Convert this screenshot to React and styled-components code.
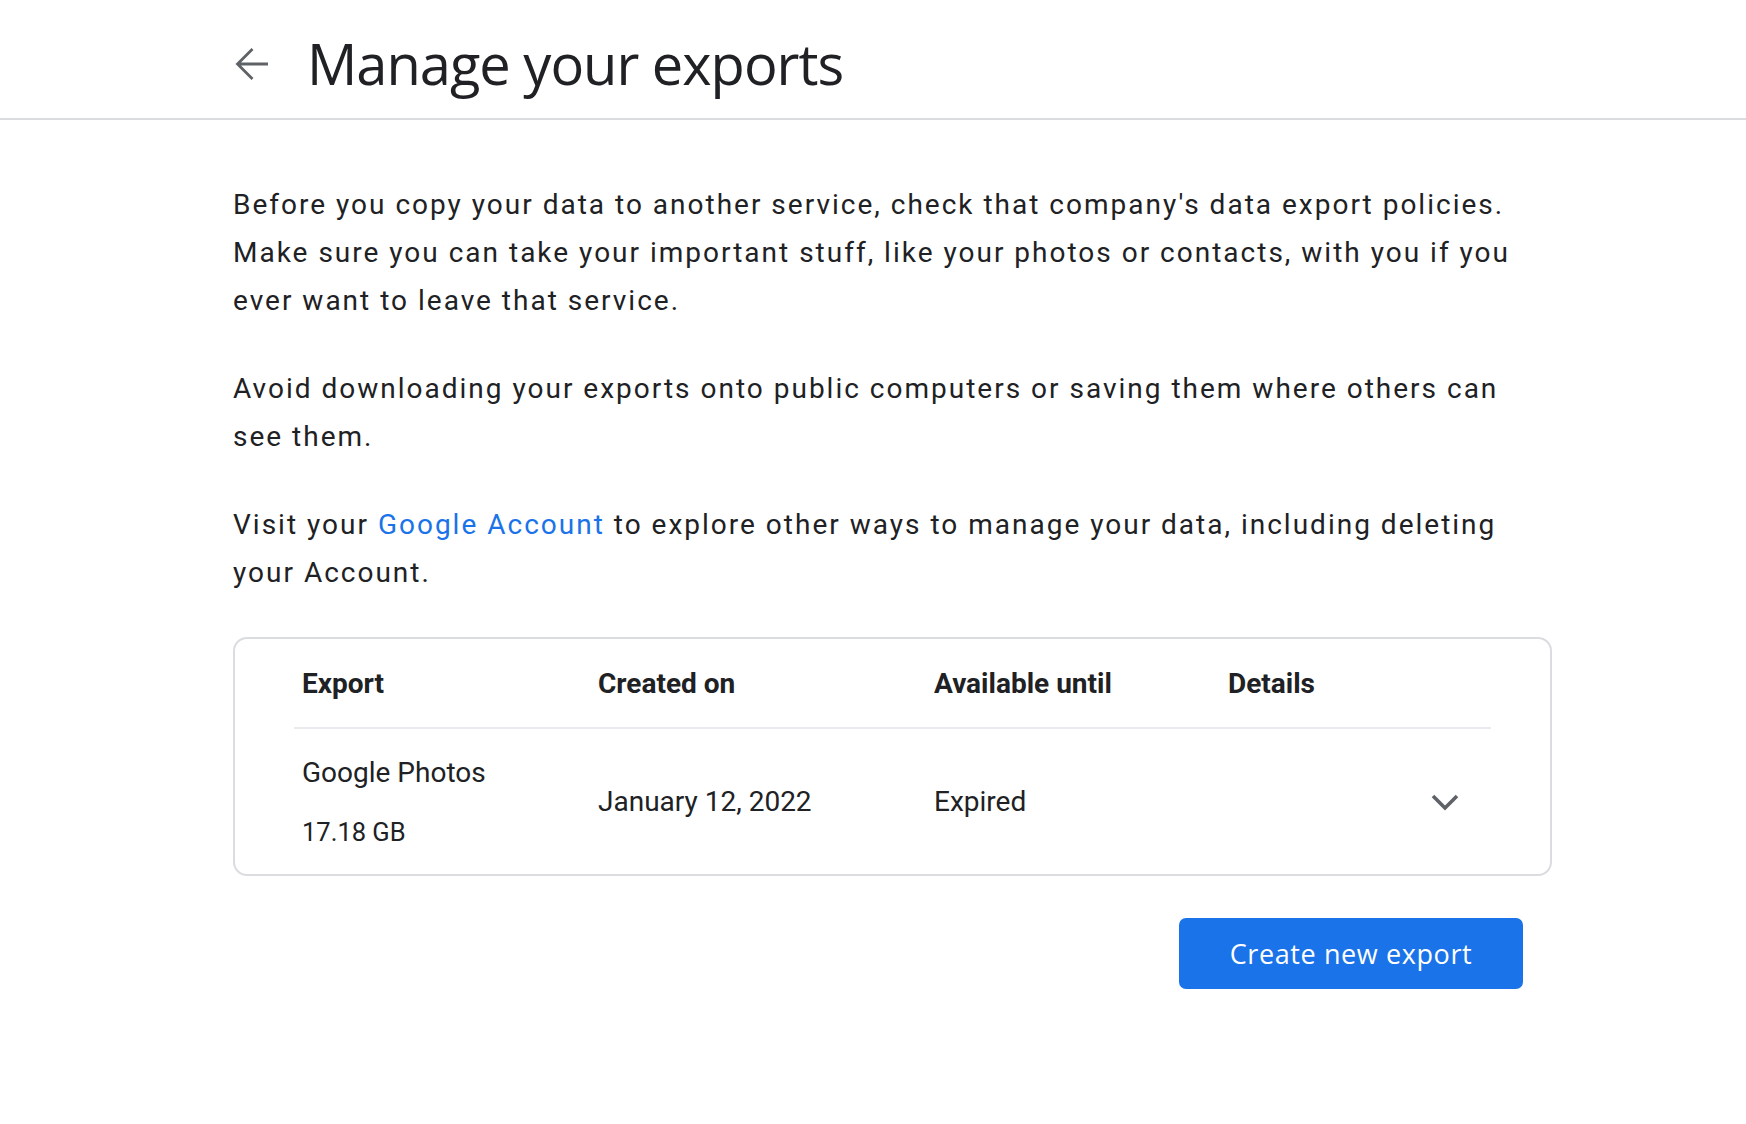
import React from 'react';
import styled, { createGlobalStyle } from 'styled-components';

const GlobalStyle = createGlobalStyle`
  html, body {
    margin: 0;
    padding: 0;
    background: #ffffff;
  }
  body {
    font-family: Roboto, "Liberation Sans", sans-serif;
    color: #202124;
  }
`;

const Page = styled.div`
  width: 100%;
  min-height: 1124px;
  background: #fff;
`;

const Header = styled.header`
  display: flex;
  align-items: center;
  height: 120px;
  padding-left: 235px;
  gap: 38px;
  border-bottom: 2px solid #dadce0;
  box-sizing: border-box;
`;

const BackButton = styled.button`
  display: flex;
  align-items: center;
  justify-content: center;
  padding: 0;
  border: none;
  background: transparent;
  cursor: pointer;
  margin-top: 10px;
`;

const Title = styled.h1`
  margin: 8px 0 0;
  font-family: "Open Sans", sans-serif;
  font-weight: 400;
  font-size: 56px;
  letter-spacing: -1px;
  color: #202124;
  line-height: 1;
`;

const Main = styled.main`
  width: 1319px;
  margin-left: 233px;
  padding-top: 61px;
`;

const Paragraph = styled.p`
  margin: 0 0 40px;
  font-size: 28px;
  line-height: 48px;
  letter-spacing: 2px;
  color: #202124;
`;

const Link = styled.a`
  color: #1a73e8;
  text-decoration: none;
`;

const Card = styled.div`
  border: 2px solid #dadce0;
  border-radius: 14px;
  padding: 0 59px;
  margin-top: 0;
`;

const Row = styled.div`
  display: grid;
  grid-template-columns: 296px 336px 294px 1fr;
  align-items: center;
  height: ${(p) => p.$height}px;
  border-bottom: ${(p) => (p.$divider ? '2px solid #e8eaed' : 'none')};
`;

const HeadCell = styled.div`
  padding-left: 8px;
  font-size: 28px;
  font-weight: 700;
  color: #202124;
`;

const Cell = styled.div`
  padding-left: 8px;
  font-size: 28px;
  line-height: 40px;
  color: #202124;
`;

const SizeText = styled.div`
  font-size: 25.5px;
  line-height: 36px;
  margin-top: 21px;
`;

const ChevronCell = styled.div`
  display: flex;
  justify-content: flex-end;
  padding-right: 32px;
`;

const Actions = styled.div`
  display: flex;
  justify-content: flex-end;
  padding-right: 29px;
  margin-top: 42px;
`;

const PrimaryButton = styled.button`
  width: 344px;
  height: 71px;
  border: none;
  border-radius: 7px;
  background: #1a73e8;
  color: #fff;
  font-family: "Open Sans", sans-serif;
  font-weight: 500;
  font-size: 27px;
  letter-spacing: 0.6px;
  cursor: pointer;
`;

const ArrowBack = () => (
  <svg width="34" height="34" viewBox="0 0 34 34" fill="none">
    <path d="M33 17H2.5M17.5 2L2.5 17l15 15" stroke="#5f6368" strokeWidth="2.8" />
  </svg>
);

const ChevronDown = () => (
  <svg width="28" height="18" viewBox="0 0 28 18" fill="none">
    <path d="M2 3l12 12 12-12" stroke="#5f6368" strokeWidth="3.6" />
  </svg>
);

export default function App() {
  return (
    <Page>
      <GlobalStyle />
      <Header>
        <BackButton aria-label="Back">
          <ArrowBack />
        </BackButton>
        <Title>Manage your exports</Title>
      </Header>
      <Main>
        <Paragraph>
          Before you copy your data to another service, check that company's data export policies.
          Make sure you can take your important stuff, like your photos or contacts, with you if you
          ever want to leave that service.
        </Paragraph>
        <Paragraph>
          Avoid downloading your exports onto public computers or saving them where others can see
          them.
        </Paragraph>
        <Paragraph>
          Visit your <Link href="#">Google Account</Link> to explore other ways to manage your data,
          including deleting your Account.
        </Paragraph>
        <Card>
          <Row $height={88} $divider>
            <HeadCell>Export</HeadCell>
            <HeadCell>Created on</HeadCell>
            <HeadCell>Available until</HeadCell>
            <HeadCell>Details</HeadCell>
          </Row>
          <Row $height={145}>
            <Cell>
              <div>Google Photos</div>
              <SizeText>17.18 GB</SizeText>
            </Cell>
            <Cell>January 12, 2022</Cell>
            <Cell>Expired</Cell>
            <ChevronCell>
              <ChevronDown />
            </ChevronCell>
          </Row>
        </Card>
        <Actions>
          <PrimaryButton>Create new export</PrimaryButton>
        </Actions>
      </Main>
    </Page>
  );
}
